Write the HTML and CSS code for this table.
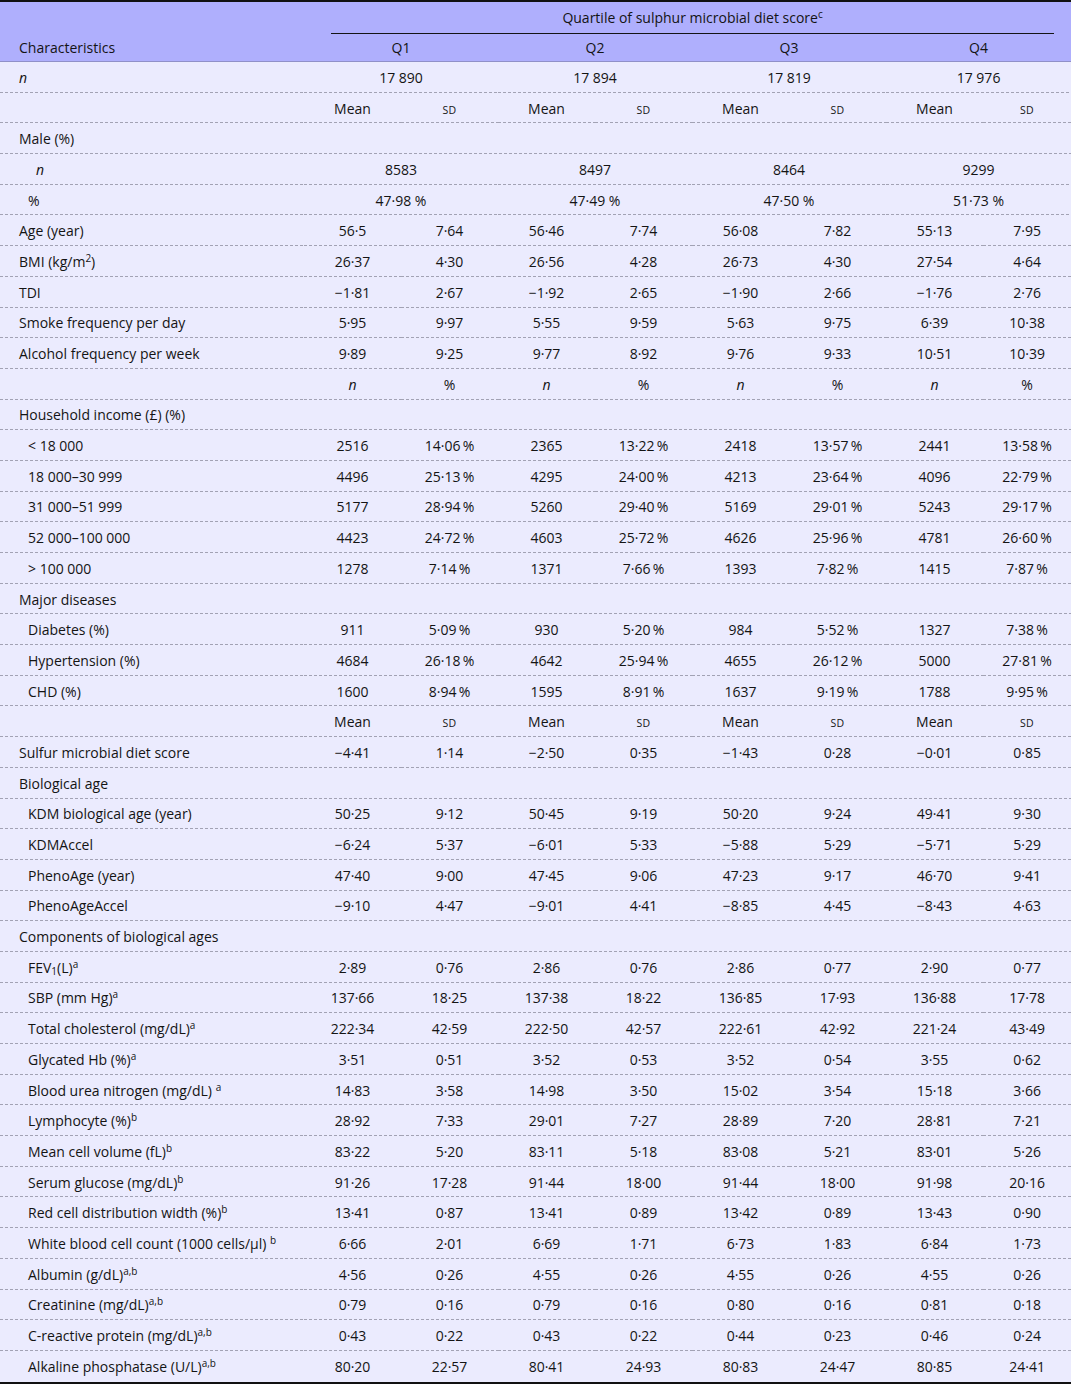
FILE: index.html
```html
<!DOCTYPE html>
<html lang="en">
<head>
    <meta charset="UTF-8">
    <title>Characteristics by quartile of sulphur microbial diet score</title>
    <link rel="stylesheet" href="styles.css">
</head>
<body>
    <table class="data-table">
        <colgroup>
            <col class="col-label">
            <col><col><col><col><col><col><col>
            <col class="col-last">
        </colgroup>
        <thead>
            <tr class="head-top">
                <th class="label" rowspan="2">Characteristics</th>
                <th class="quartile" colspan="8"><div class="quartile-title">Quartile of sulphur microbial diet score<sup>c</sup></div></th>
            </tr>
            <tr class="head-bottom">
                <th colspan="2">Q1</th>
                <th colspan="2">Q2</th>
                <th colspan="2">Q3</th>
                <th colspan="2">Q4</th>
            </tr>
        </thead>
        <tbody>
            <tr><td class="label"><i>n</i></td><td colspan="2">17 890</td><td colspan="2">17 894</td><td colspan="2">17 819</td><td colspan="2">17 976</td></tr>
            <tr><td class="label"></td><td>Mean</td><td><span class="sc">SD</span></td><td>Mean</td><td><span class="sc">SD</span></td><td>Mean</td><td><span class="sc">SD</span></td><td>Mean</td><td><span class="sc">SD</span></td></tr>
            <tr><td class="label">Male (%)</td><td colspan="8"></td></tr>
            <tr><td class="label sub sub-n"><i>n</i></td><td colspan="2">8583</td><td colspan="2">8497</td><td colspan="2">8464</td><td colspan="2">9299</td></tr>
            <tr><td class="label sub">%</td><td colspan="2">47·98 %</td><td colspan="2">47·49 %</td><td colspan="2">47·50 %</td><td colspan="2">51·73 %</td></tr>
            <tr><td class="label">Age (year)</td><td>56·5</td><td>7·64</td><td>56·46</td><td>7·74</td><td>56·08</td><td>7·82</td><td>55·13</td><td>7·95</td></tr>
            <tr><td class="label">BMI (kg/m<sup>2</sup>)</td><td>26·37</td><td>4·30</td><td>26·56</td><td>4·28</td><td>26·73</td><td>4·30</td><td>27·54</td><td>4·64</td></tr>
            <tr><td class="label">TDI</td><td>−1·81</td><td>2·67</td><td>−1·92</td><td>2·65</td><td>−1·90</td><td>2·66</td><td>−1·76</td><td>2·76</td></tr>
            <tr><td class="label">Smoke frequency per day</td><td>5·95</td><td>9·97</td><td>5·55</td><td>9·59</td><td>5·63</td><td>9·75</td><td>6·39</td><td>10·38</td></tr>
            <tr><td class="label">Alcohol frequency per week</td><td>9·89</td><td>9·25</td><td>9·77</td><td>8·92</td><td>9·76</td><td>9·33</td><td>10·51</td><td>10·39</td></tr>
            <tr><td class="label"></td><td><i>n</i></td><td>%</td><td><i>n</i></td><td>%</td><td><i>n</i></td><td>%</td><td><i>n</i></td><td>%</td></tr>
            <tr><td class="label">Household income (£) (%)</td><td colspan="8"></td></tr>
            <tr><td class="label sub">&lt; 18 000</td><td>2516</td><td>14·06&thinsp;%</td><td>2365</td><td>13·22&thinsp;%</td><td>2418</td><td>13·57&thinsp;%</td><td>2441</td><td>13·58&thinsp;%</td></tr>
            <tr><td class="label sub">18 000–30 999</td><td>4496</td><td>25·13&thinsp;%</td><td>4295</td><td>24·00&thinsp;%</td><td>4213</td><td>23·64&thinsp;%</td><td>4096</td><td>22·79&thinsp;%</td></tr>
            <tr><td class="label sub">31 000–51 999</td><td>5177</td><td>28·94&thinsp;%</td><td>5260</td><td>29·40&thinsp;%</td><td>5169</td><td>29·01&thinsp;%</td><td>5243</td><td>29·17&thinsp;%</td></tr>
            <tr><td class="label sub">52 000–100 000</td><td>4423</td><td>24·72&thinsp;%</td><td>4603</td><td>25·72&thinsp;%</td><td>4626</td><td>25·96&thinsp;%</td><td>4781</td><td>26·60&thinsp;%</td></tr>
            <tr><td class="label sub">&gt; 100 000</td><td>1278</td><td>7·14&thinsp;%</td><td>1371</td><td>7·66&thinsp;%</td><td>1393</td><td>7·82&thinsp;%</td><td>1415</td><td>7·87&thinsp;%</td></tr>
            <tr><td class="label">Major diseases</td><td colspan="8"></td></tr>
            <tr><td class="label sub">Diabetes (%)</td><td>911</td><td>5·09&thinsp;%</td><td>930</td><td>5·20&thinsp;%</td><td>984</td><td>5·52&thinsp;%</td><td>1327</td><td>7·38&thinsp;%</td></tr>
            <tr><td class="label sub">Hypertension (%)</td><td>4684</td><td>26·18&thinsp;%</td><td>4642</td><td>25·94&thinsp;%</td><td>4655</td><td>26·12&thinsp;%</td><td>5000</td><td>27·81&thinsp;%</td></tr>
            <tr><td class="label sub">CHD (%)</td><td>1600</td><td>8·94&thinsp;%</td><td>1595</td><td>8·91&thinsp;%</td><td>1637</td><td>9·19&thinsp;%</td><td>1788</td><td>9·95&thinsp;%</td></tr>
            <tr><td class="label"></td><td>Mean</td><td><span class="sc">SD</span></td><td>Mean</td><td><span class="sc">SD</span></td><td>Mean</td><td><span class="sc">SD</span></td><td>Mean</td><td><span class="sc">SD</span></td></tr>
            <tr><td class="label">Sulfur microbial diet score</td><td>−4·41</td><td>1·14</td><td>−2·50</td><td>0·35</td><td>−1·43</td><td>0·28</td><td>−0·01</td><td>0·85</td></tr>
            <tr><td class="label">Biological age</td><td colspan="8"></td></tr>
            <tr><td class="label sub">KDM biological age (year)</td><td>50·25</td><td>9·12</td><td>50·45</td><td>9·19</td><td>50·20</td><td>9·24</td><td>49·41</td><td>9·30</td></tr>
            <tr><td class="label sub">KDMAccel</td><td>−6·24</td><td>5·37</td><td>−6·01</td><td>5·33</td><td>−5·88</td><td>5·29</td><td>−5·71</td><td>5·29</td></tr>
            <tr><td class="label sub">PhenoAge (year)</td><td>47·40</td><td>9·00</td><td>47·45</td><td>9·06</td><td>47·23</td><td>9·17</td><td>46·70</td><td>9·41</td></tr>
            <tr><td class="label sub">PhenoAgeAccel</td><td>−9·10</td><td>4·47</td><td>−9·01</td><td>4·41</td><td>−8·85</td><td>4·45</td><td>−8·43</td><td>4·63</td></tr>
            <tr><td class="label">Components of biological ages</td><td colspan="8"></td></tr>
            <tr><td class="label sub">FEV<sub>1</sub>(L)<sup>a</sup></td><td>2·89</td><td>0·76</td><td>2·86</td><td>0·76</td><td>2·86</td><td>0·77</td><td>2·90</td><td>0·77</td></tr>
            <tr><td class="label sub">SBP (mm Hg)<sup>a</sup></td><td>137·66</td><td>18·25</td><td>137·38</td><td>18·22</td><td>136·85</td><td>17·93</td><td>136·88</td><td>17·78</td></tr>
            <tr><td class="label sub">Total cholesterol (mg/dL)<sup>a</sup></td><td>222·34</td><td>42·59</td><td>222·50</td><td>42·57</td><td>222·61</td><td>42·92</td><td>221·24</td><td>43·49</td></tr>
            <tr><td class="label sub">Glycated Hb (%)<sup>a</sup></td><td>3·51</td><td>0·51</td><td>3·52</td><td>0·53</td><td>3·52</td><td>0·54</td><td>3·55</td><td>0·62</td></tr>
            <tr><td class="label sub">Blood urea nitrogen (mg/dL) <sup>a</sup></td><td>14·83</td><td>3·58</td><td>14·98</td><td>3·50</td><td>15·02</td><td>3·54</td><td>15·18</td><td>3·66</td></tr>
            <tr><td class="label sub">Lymphocyte (%)<sup>b</sup></td><td>28·92</td><td>7·33</td><td>29·01</td><td>7·27</td><td>28·89</td><td>7·20</td><td>28·81</td><td>7·21</td></tr>
            <tr><td class="label sub">Mean cell volume (fL)<sup>b</sup></td><td>83·22</td><td>5·20</td><td>83·11</td><td>5·18</td><td>83·08</td><td>5·21</td><td>83·01</td><td>5·26</td></tr>
            <tr><td class="label sub">Serum glucose (mg/dL)<sup>b</sup></td><td>91·26</td><td>17·28</td><td>91·44</td><td>18·00</td><td>91·44</td><td>18·00</td><td>91·98</td><td>20·16</td></tr>
            <tr><td class="label sub">Red cell distribution width (%)<sup>b</sup></td><td>13·41</td><td>0·87</td><td>13·41</td><td>0·89</td><td>13·42</td><td>0·89</td><td>13·43</td><td>0·90</td></tr>
            <tr><td class="label sub">White blood cell count (1000 cells/μl) <sup>b</sup></td><td>6·66</td><td>2·01</td><td>6·69</td><td>1·71</td><td>6·73</td><td>1·83</td><td>6·84</td><td>1·73</td></tr>
            <tr><td class="label sub">Albumin (g/dL)<sup>a,b</sup></td><td>4·56</td><td>0·26</td><td>4·55</td><td>0·26</td><td>4·55</td><td>0·26</td><td>4·55</td><td>0·26</td></tr>
            <tr><td class="label sub">Creatinine (mg/dL)<sup>a,b</sup></td><td>0·79</td><td>0·16</td><td>0·79</td><td>0·16</td><td>0·80</td><td>0·16</td><td>0·81</td><td>0·18</td></tr>
            <tr><td class="label sub">C-reactive protein (mg/dL)<sup>a,b</sup></td><td>0·43</td><td>0·22</td><td>0·43</td><td>0·22</td><td>0·44</td><td>0·23</td><td>0·46</td><td>0·24</td></tr>
            <tr class="last"><td class="label sub">Alkaline phosphatase (U/L)<sup>a,b</sup></td><td>80·20</td><td>22·57</td><td>80·41</td><td>24·93</td><td>80·83</td><td>24·47</td><td>80·85</td><td>24·41</td></tr>
        </tbody>
    </table>
</body>
</html>
```

FILE: styles.css
```css
body {
    margin: 0;
    background-color: #ffffff;
    font-family: "Open Sans", "Noto Sans", Arial, sans-serif;
    font-size: 14px;
    color: #141414;
}
.data-table {
    width: 1071px;
    border-collapse: collapse;
    table-layout: fixed;
    border-top: 2px solid #111;
    border-bottom: 2px solid #111;
}
.data-table col {
    width: 97px;
}
.data-table col.col-label {
    width: 304px;
}
.data-table col.col-last {
    width: 88px;
}
thead th {
    background-color: #afaffd;
    font-weight: normal;
    text-align: center;
    padding: 0;
}
.head-top th {
    height: 32px;
}
.head-bottom th {
    height: 27px;
    border-bottom: 1px solid #9090c8;
}
thead th.label {
    vertical-align: bottom;
    padding-bottom: 4px;
    border-bottom: 1px solid #9090c8;
}
.quartile {
    padding: 0 17px 0 27px;
    vertical-align: bottom;
}
.quartile-title {
    border-bottom: 1.5px solid #141414;
    padding-bottom: 5px;
    line-height: 20px;
}
tbody td {
    height: 30.7px;
    padding: 0;
    text-align: center;
    vertical-align: middle;
    background-color: #ebebfe;
    background-image: linear-gradient(to right, #a2a2b4 60%, transparent 60%);
    background-size: 5px 1px;
    background-repeat: repeat-x;
    background-position: left bottom;
    white-space: nowrap;
}
tbody tr.last td {
    background-image: none;
}
.label {
    text-align: left;
    padding-left: 19px;
}
tbody td.label {
    text-align: left;
    padding-left: 19px;
}
tbody td.sub {
    padding-left: 28px;
}
tbody td.sub-n {
    padding-left: 36px;
}
.sc {
    font-size: 10.5px;
    letter-spacing: 0.3px;
}
sup {
    font-size: 10px;
    line-height: 0;
    vertical-align: 5px;
}
sub {
    font-size: 10px;
    line-height: 0;
    vertical-align: -2px;
}
```
